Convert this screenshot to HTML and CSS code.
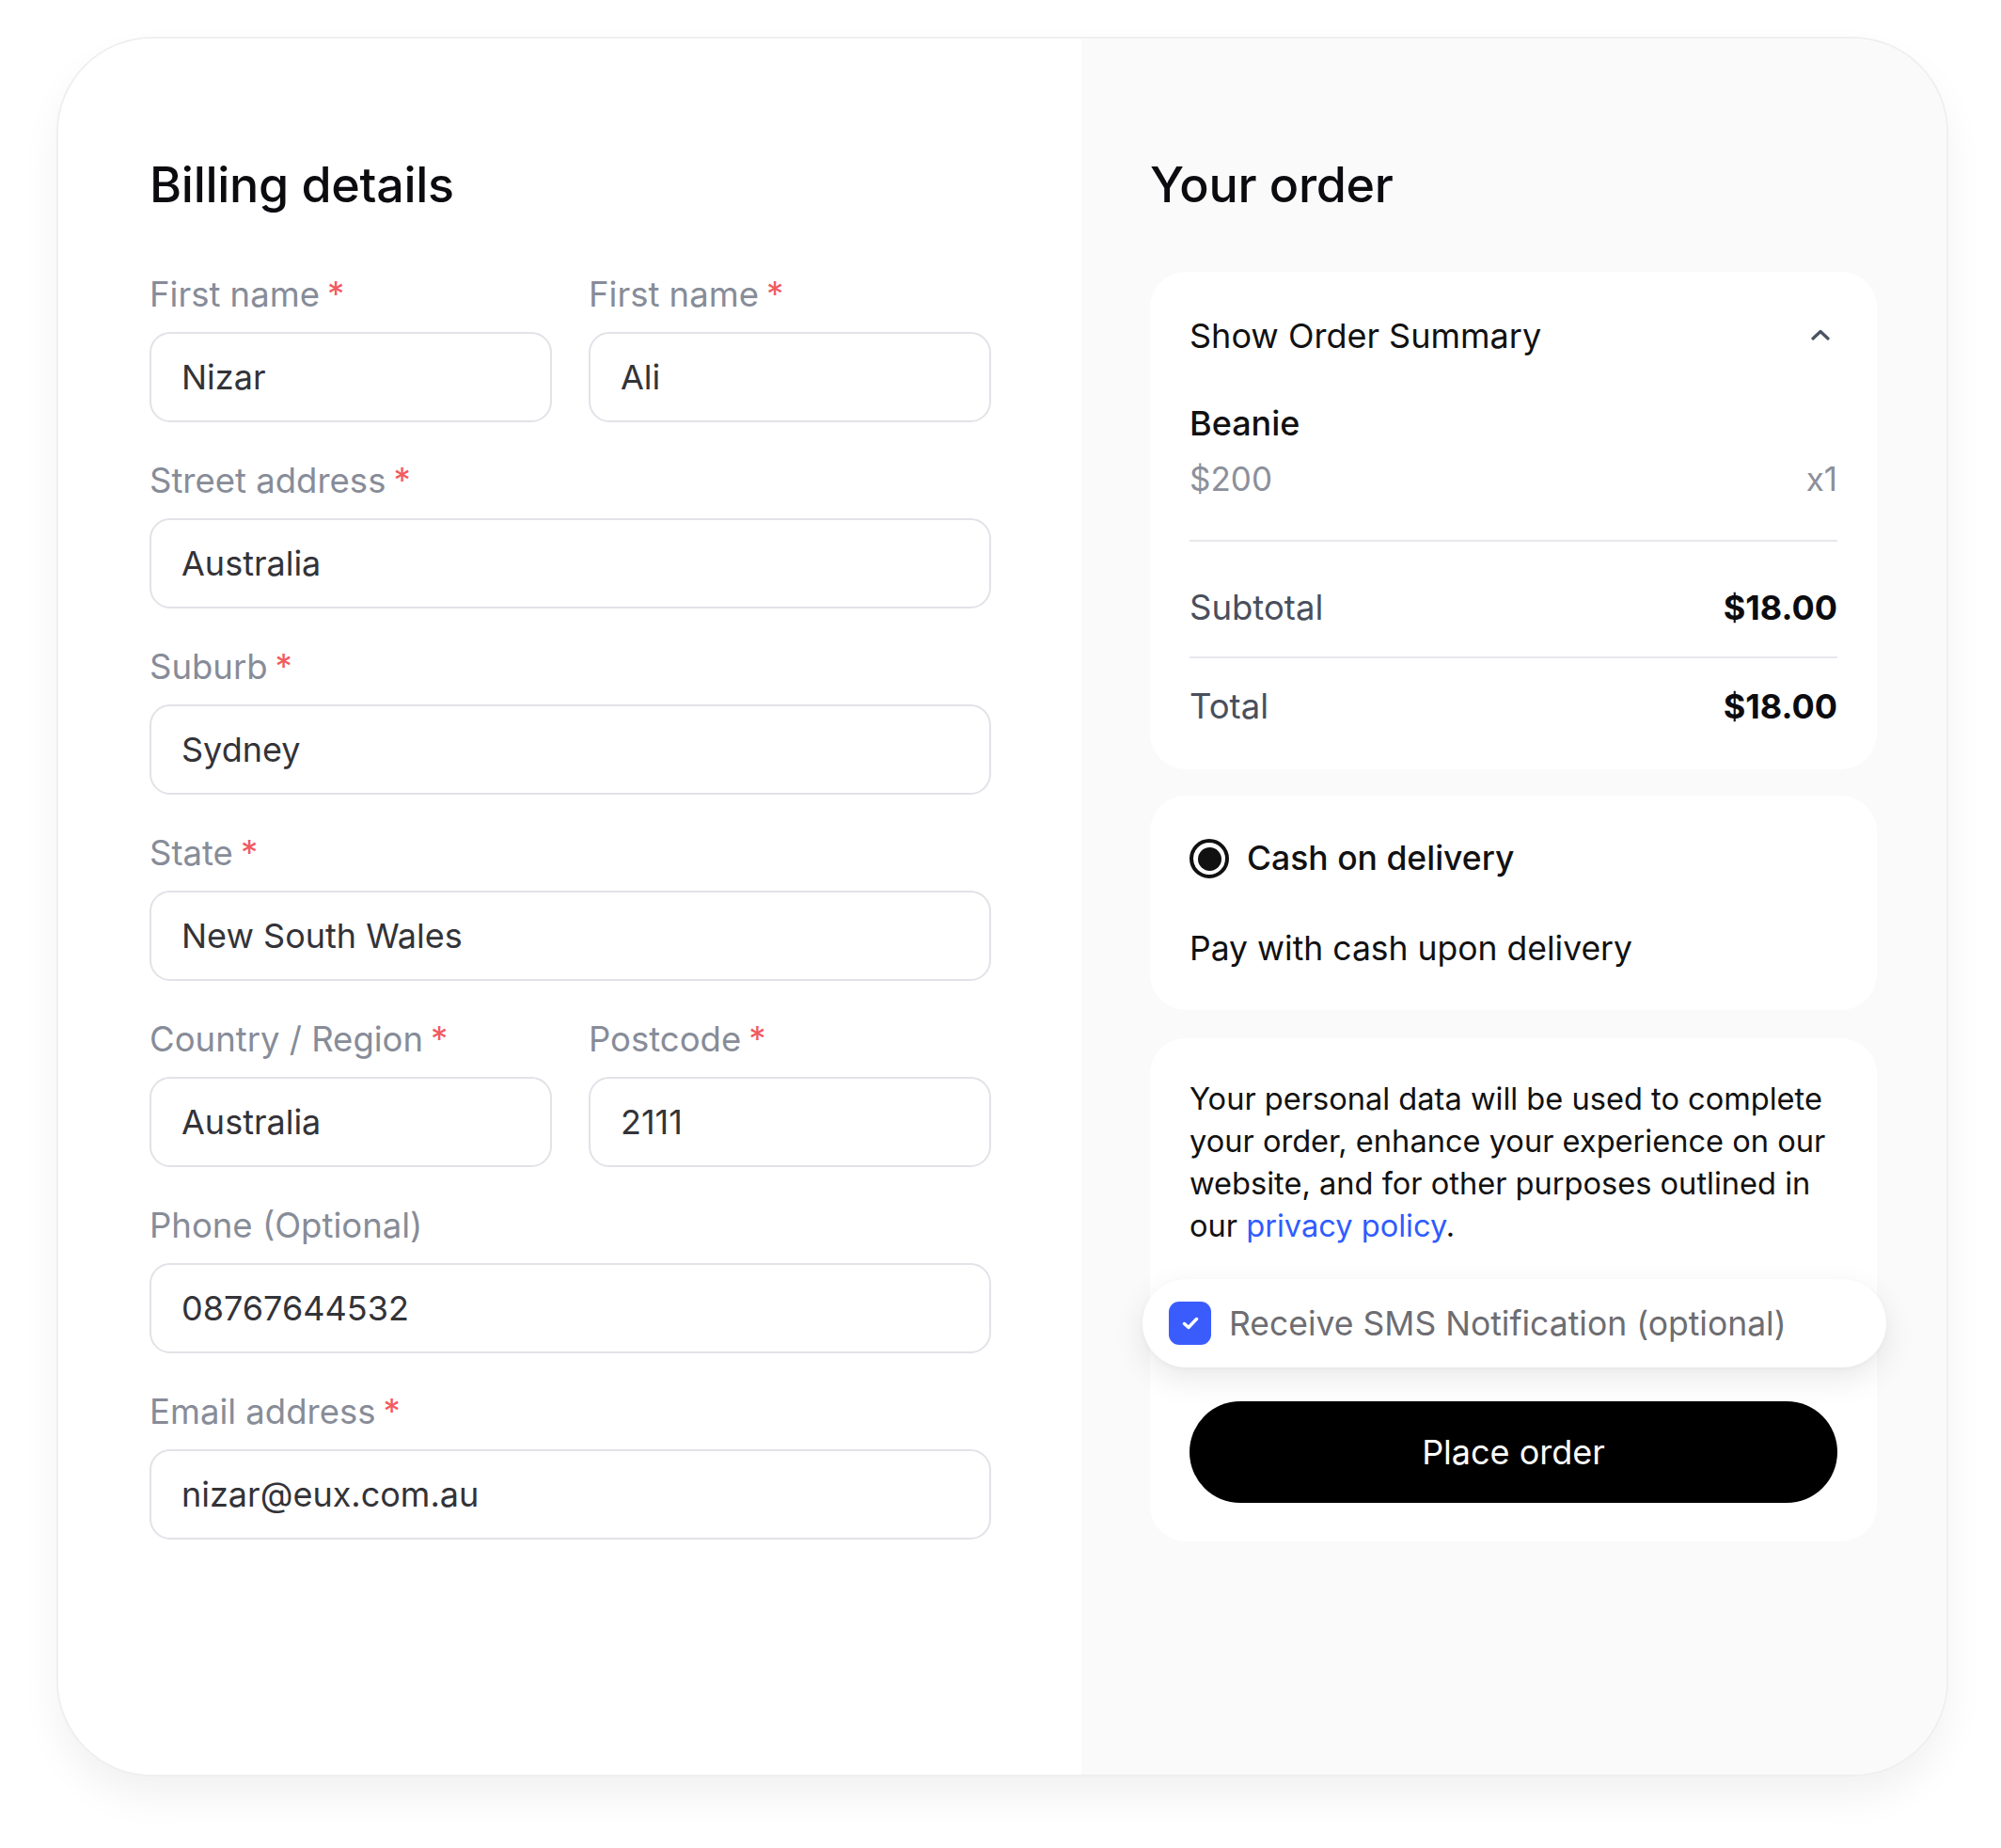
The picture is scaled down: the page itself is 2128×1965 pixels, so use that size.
FILE: index.html
```html
<!DOCTYPE html>
<html lang="en">
<head>
<meta charset="utf-8">
<title>Checkout</title>
<link rel="stylesheet" href="styles.css">
</head>
<body>
<div class="page">
  <div class="checkout">
    <section class="billing">
      <h1 class="title">Billing details</h1>
      <div class="fields">
        <div class="row two">
          <div class="field">
            <label class="label">First name<span class="req">*</span></label>
            <div class="input">Nizar</div>
          </div>
          <div class="field">
            <label class="label">First name<span class="req">*</span></label>
            <div class="input">Ali</div>
          </div>
        </div>
        <div class="field">
          <label class="label">Street address<span class="req">*</span></label>
          <div class="input">Australia</div>
        </div>
        <div class="field">
          <label class="label">Suburb<span class="req">*</span></label>
          <div class="input">Sydney</div>
        </div>
        <div class="field">
          <label class="label">State<span class="req">*</span></label>
          <div class="input">New South Wales</div>
        </div>
        <div class="row two">
          <div class="field">
            <label class="label">Country / Region<span class="req">*</span></label>
            <div class="input">Australia</div>
          </div>
          <div class="field">
            <label class="label">Postcode<span class="req">*</span></label>
            <div class="input">2111</div>
          </div>
        </div>
        <div class="field">
          <label class="label">Phone (Optional)</label>
          <div class="input">08767644532</div>
        </div>
        <div class="field">
          <label class="label">Email address<span class="req">*</span></label>
          <div class="input">nizar@eux.com.au</div>
        </div>
      </div>
    </section>

    <section class="order">
      <h1 class="title">Your order</h1>

      <div class="card summary">
        <div class="summary-head">
          <span>Show Order Summary</span>
          <svg class="chevron" width="20" height="12" viewBox="0 0 20 12" aria-hidden="true">
            <path d="M2 10 L10 2.5 L18 10" fill="none" stroke="#4b5261" stroke-width="3.2" stroke-linecap="round" stroke-linejoin="round"/>
          </svg>
        </div>
        <div class="item-name">Beanie</div>
        <div class="item-meta">
          <span>$200</span>
          <span>x1</span>
        </div>
        <div class="totals-row first">
          <span class="t-label">Subtotal</span>
          <span class="t-value">$18.00</span>
        </div>
        <div class="totals-row last">
          <span class="t-label">Total</span>
          <span class="t-value">$18.00</span>
        </div>
      </div>

      <div class="card payment">
        <div class="method">
          <span class="radio"><span class="dot"></span></span>
          <span class="method-name">Cash on delivery</span>
        </div>
        <p class="method-desc">Pay with cash upon delivery</p>
      </div>

      <div class="card confirm">
        <p class="privacy">Your personal data will be used to complete your order, enhance your experience on our website, and for other purposes outlined in our <a class="link" href="#">privacy policy</a><span class="stop">.</span></p>
        <div class="sms">
          <span class="check">
            <svg width="20" height="16" viewBox="0 0 20 16" aria-hidden="true">
              <path d="M3.5 8.5 L8 12.5 L16.5 3.5" fill="none" stroke="#ffffff" stroke-width="3.4" stroke-linecap="round" stroke-linejoin="round"/>
            </svg>
          </span>
          <span class="sms-text">Receive SMS Notification (optional)</span>
        </div>
        <button class="place" type="button">Place order</button>
      </div>
    </section>
  </div>
</div>
</body>
</html>
```

FILE: styles.css
```css
* { box-sizing: border-box; }

html, body {
  margin: 0;
  padding: 0;
  background: #ffffff;
}

body {
  font-family: Inter, "Noto Sans", "Liberation Sans", sans-serif;
  color: #111111;
  width: 2128px;
  height: 1965px;
}

.page {
  padding: 41px 0 0 62px;
}

.checkout {
  width: 2008px;
  height: 1846px;
  border-radius: 100px;
  overflow: hidden;
  display: flex;
  background: #ffffff;
  box-shadow: 0 0 0 2px #efefef, 0 22px 44px rgba(0, 0, 0, 0.06);
}

.billing {
  width: 1088px;
  padding: 124px 96px 0 97px;
  background: #ffffff;
}

.order {
  flex: 1;
  padding: 124px 74px 0 73px;
  background: #fafafa;
}

.title {
  margin: 0;
  font-size: 52px;
  line-height: 64px;
  font-weight: 500;
  color: #0c0c10;
  letter-spacing: -0.3px;
}

.fields {
  margin-top: 64px;
  display: flex;
  flex-direction: column;
  gap: 42px;
}

.row.two {
  display: grid;
  grid-template-columns: 1fr 1fr;
  gap: 39px;
}

.field {
  display: flex;
  flex-direction: column;
  gap: 20px;
}

.label {
  font-size: 36.5px;
  line-height: 40px;
  color: #878c98;
  font-weight: 400;
}

.req {
  color: #f25a5f;
  margin-left: 8px;
}

.input {
  height: 96px;
  border: 2px solid #e2e2e8;
  border-radius: 22px;
  padding: 0 32px;
  display: flex;
  align-items: center;
  font-size: 36px;
  color: #333338;
  background: #ffffff;
}

/* right column */
.card {
  background: #ffffff;
  border-radius: 38px;
  padding: 0 42px;
}

.summary {
  margin-top: 60px;
  padding-top: 48px;
  padding-bottom: 47px;
}

.summary-head {
  display: flex;
  justify-content: space-between;
  align-items: center;
  font-size: 36px;
  line-height: 40px;
  color: #111111;
}

.chevron {
  margin-right: 8px;
  margin-top: -2px;
}

.item-name {
  margin-top: 53px;
  font-size: 36px;
  line-height: 40px;
  font-weight: 500;
  color: #111111;
}

.item-meta {
  margin-top: 19px;
  display: flex;
  justify-content: space-between;
  font-size: 35px;
  line-height: 40px;
  color: #8c909b;
}

.totals-row {
  display: flex;
  justify-content: space-between;
  font-size: 36.5px;
  line-height: 40px;
  border-top: 2px solid #e7e8ec;
}

.totals-row.first {
  margin-top: 45px;
  padding: 50px 0 32px;
}

.totals-row.last {
  padding: 31px 0 0;
}

.t-label {
  color: #4a4f5c;
}

.t-value {
  font-weight: 700;
  color: #0c0c10;
  font-size: 36px;
}

.payment {
  margin-top: 28px;
  padding-top: 46px;
  padding-bottom: 45px;
}

.method {
  display: flex;
  align-items: center;
  gap: 19px;
  height: 42px;
}

.radio {
  width: 42px;
  height: 42px;
  border: 4px solid #111111;
  border-radius: 50%;
  display: flex;
  align-items: center;
  justify-content: center;
}

.dot {
  width: 25px;
  height: 25px;
  border-radius: 50%;
  background: #111111;
}

.method-name {
  font-size: 35.5px;
  line-height: 40px;
  font-weight: 500;
  color: #111111;
}

.method-desc {
  margin: 55px 0 0;
  font-size: 35.5px;
  line-height: 40px;
  color: #111111;
}

.confirm {
  margin-top: 30px;
  padding-top: 42px;
  padding-bottom: 41px;
}

.privacy {
  margin: 0;
  font-size: 32.6px;
  line-height: 45px;
  color: #111111;
}

.link {
  color: #2f5cff;
  text-decoration: none;
}

.stop {
  color: #111111;
}

.sms {
  margin: 34px -52px 0 -50px;
  height: 94px;
  border-radius: 47px;
  background: #ffffff;
  box-shadow: 0 12px 34px rgba(0, 0, 0, 0.09), 0 2px 6px rgba(0, 0, 0, 0.03);
  display: flex;
  align-items: center;
  padding-left: 28px;
  gap: 19px;
}

.check {
  width: 45px;
  height: 46px;
  border-radius: 11px;
  background: #3b5cfd;
  display: flex;
  align-items: center;
  justify-content: center;
}

.sms-text {
  font-size: 35.5px;
  color: #6d6d72;
}

.place {
  margin-top: 36px;
  width: 100%;
  height: 108px;
  border: none;
  border-radius: 54px;
  background: #000000;
  color: #ffffff;
  font-family: Inter, "Noto Sans", "Liberation Sans", sans-serif;
  font-size: 36px;
  cursor: pointer;
}
```
